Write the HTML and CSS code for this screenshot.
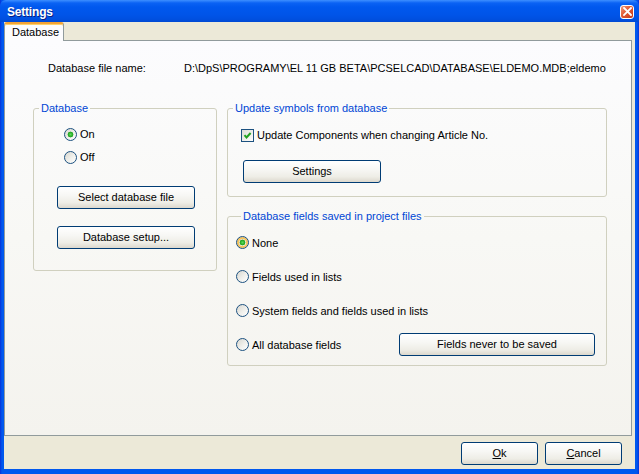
FILE: index.html
```html
<!DOCTYPE html>
<html>
<head>
<meta charset="utf-8">
<title>Settings</title>
<link rel="stylesheet" href="styles.css">
</head>
<body>
<div class="window">
  <div class="titlebar">
    <span class="title">Settings</span>
    <span class="close"><svg width="9" height="9" viewBox="0 0 9 9"><path d="M1 1L8 8M8 1L1 8" stroke="#fff" stroke-width="1.8" stroke-linecap="square"/></svg></span>
  </div>
  <div class="client">
    <div class="tabs"><div class="tab">Database</div></div>
    <div class="page">
      <div class="filerow">
        <span class="flabel">Database file name:</span>
        <span class="fvalue">D:\DpS\PROGRAMY\EL 11 GB BETA\PCSELCAD\DATABASE\ELDEMO.MDB;eldemo</span>
      </div>
      <div class="groups">
        <fieldset class="group g-db">
          <legend>Database</legend>
          <div class="opt first"><span class="radio checked"></span><span>On</span></div>
          <div class="opt second"><span class="radio"></span><span>Off</span></div>
          <button class="btn wide b-select">Select database file</button>
          <button class="btn wide b-setup">Database setup...</button>
        </fieldset>
        <div class="rightcol">
          <fieldset class="group g-upd">
            <legend>Update symbols from database</legend>
            <div class="opt chkrow"><span class="check"><svg width="11" height="11" viewBox="0 0 11 11"><path d="M2.5 5.2L4.5 7.4L8.6 3" fill="none" stroke="#21a121" stroke-width="2"/></svg></span><span>Update Components when changing Article No.</span></div>
            <button class="btn wide b-settings">Settings</button>
          </fieldset>
          <fieldset class="group g-fields">
            <legend>Database fields saved in project files</legend>
            <div class="frow"><span class="radio checked hot"></span><span>None</span></div>
            <div class="frow"><span class="radio"></span><span>Fields used in lists</span></div>
            <div class="frow"><span class="radio"></span><span>System fields and fields used in lists</span></div>
            <div class="frow"><span class="radio"></span><span>All database fields</span><button class="btn b-never">Fields never to be saved</button></div>
          </fieldset>
        </div>
      </div>
    </div>
    <div class="footer">
      <button class="btn b-foot"><u>O</u>k</button>
      <button class="btn b-foot"><u>C</u>ancel</button>
    </div>
  </div>
</div>
</body>
</html>
```

FILE: styles.css
```css
html, body {
  margin: 0;
  padding: 0;
  background: #ece9d8;
}
body {
  font-family: "Liberation Sans", Arial, sans-serif;
  font-size: 11px;
  color: #000;
}
.window {
  width: 639px;
  height: 474px;
  box-sizing: border-box;
  display: flex;
  flex-direction: column;
  background: linear-gradient(to right, #0831d9 0, #0058ee 2px, #0058ee 637px, #0831d9 639px);
  padding: 0 4px 5px 4px;
}
.titlebar {
  height: 22px;
  margin: 0 -4px;
  padding: 0 5px 0 7px;
  display: flex;
  align-items: center;
  background: linear-gradient(to bottom, #3d8fff 0, #0a62f4 3px, #0058ee 7px, #0054e8 15px, #0050e0 19px, #0049d3 22px);
  border-radius: 6px 6px 0 0;
}
.title {
  flex: 1;
  color: #fff;
  font-weight: bold;
  font-size: 12px;
  letter-spacing: -0.2px;
  text-shadow: 1px 1px 0 #0a1e82;
  line-height: 14px;
  margin-top: 1px;
}
.close {
  width: 14px;
  height: 14px;
  box-sizing: border-box;
  border: 1px solid #fff;
  border-radius: 3px;
  background: linear-gradient(135deg, #f09a7c 0, #e25a33 45%, #c4381a 100%);
  display: flex;
  align-items: center;
  justify-content: center;
  margin-top: 1px;
}
.client {
  flex: 1;
  background: #ece9d8;
  display: flex;
  flex-direction: column;
}
.tabs {
  height: 18px;
  display: flex;
  align-items: flex-start;
}
.tab {
  position: relative;
  z-index: 1;
  box-sizing: border-box;
  height: 19px;
  width: 60px;
  background: #fcfcfe;
  border: 1px solid #919b9c;
  border-top: 2px solid #f2a337;
  border-bottom: none;
  border-radius: 3px 3px 0 0;
  padding-left: 7px;
  line-height: 16px;
  box-shadow: inset 0 1px 0 #ffd06a;
}
.page {
  height: 396px;
  box-sizing: border-box;
  margin-right: 3px;
  border: 1px solid #919b9c;
  background: linear-gradient(to bottom, #fcfcfe 0, #f8f8f5 50%, #f4f3ee 100%);
  display: flex;
  flex-direction: column;
}
.filerow {
  display: flex;
  padding: 21px 0 0 43px;
  line-height: 13px;
  white-space: nowrap;
}
.flabel {
  width: 136px;
}
.groups {
  display: flex;
  margin-top: 27px;
  padding-left: 28px;
  gap: 10px;
}
.group {
  margin: 0;
  padding: 0;
  min-width: 0;
  box-sizing: border-box;
  border: 1px solid #d0d0bf;
  border-radius: 3px;
  display: flex;
  flex-direction: column;
  align-items: flex-start;
}
.group legend {
  color: #0046d5;
  padding: 0 2px;
  margin-left: 5px;
  line-height: 13px;
}
.g-db {
  width: 184px;
  height: 169px;
}
.rightcol {
  width: 380px;
  display: flex;
  flex-direction: column;
  gap: 13px;
}
.g-upd {
  height: 95px;
}
.g-fields {
  height: 156px;
  padding: 8px 11px 0 8px;
  gap: 11px;
  align-items: stretch;
}
.opt {
  display: flex;
  align-items: center;
  gap: 3px;
  height: 13px;
  line-height: 13px;
}
.g-db .first {
  margin: 13px 0 0 30px;
}
.g-db .second {
  margin: 10px 0 0 30px;
}
.chkrow {
  margin: 14px 0 0 13px;
}
.frow {
  display: flex;
  align-items: center;
  gap: 3px;
  height: 23px;
}
.radio {
  width: 13px;
  height: 13px;
  box-sizing: border-box;
  border-radius: 50%;
  border: 1px solid #1c5180;
  background: linear-gradient(135deg, #d8d7d0 0, #f2f2ee 60%, #ffffff 100%);
  flex: none;
}
.radio.checked {
  background: radial-gradient(circle at 50% 50%, #5fd85c 0, #2fb42c 1.8px, #21a121 2.6px, transparent 3.2px), linear-gradient(135deg, #d8d7d0 0, #f2f2ee 60%, #ffffff 100%);
}
.radio.hot {
  box-shadow: inset 0 0 0 2px #f6c45c;
}
.check {
  width: 13px;
  height: 13px;
  box-sizing: border-box;
  border: 1px solid #1c5180;
  background: linear-gradient(135deg, #dcdcd7 0, #f0f0ec 60%, #ffffff 100%);
  display: flex;
  align-items: center;
  justify-content: center;
  flex: none;
}
.btn {
  font-family: "Liberation Sans", Arial, sans-serif;
  font-size: 11px;
  color: #000;
  height: 23px;
  box-sizing: border-box;
  border: 1px solid #003c74;
  border-radius: 3px;
  background: linear-gradient(to bottom, #ffffff 0, #f7f7f4 40%, #eeede6 75%, #dcd8cd 100%);
  padding: 0;
  line-height: 21px;
  text-align: center;
}
.wide {
  width: 138px;
}
.b-select {
  margin: 22px 0 0 23px;
}
.b-setup {
  margin: 17px 0 0 23px;
}
.b-settings {
  margin: 18px 0 0 15px;
}
.b-never {
  width: 196px;
  margin-left: auto;
}
.footer {
  flex: 1;
  display: flex;
  justify-content: flex-end;
  align-items: flex-start;
  gap: 7px;
  padding: 6px 13px 0 0;
}
.b-foot {
  width: 77px;
}
```
